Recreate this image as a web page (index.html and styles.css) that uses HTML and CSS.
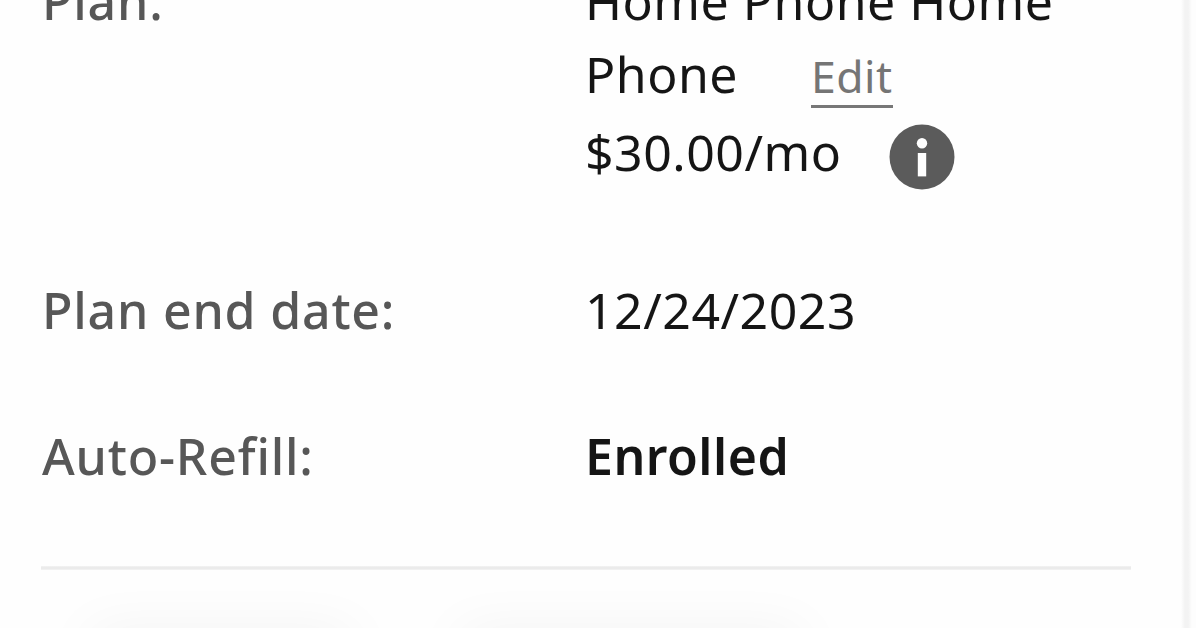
FILE: index.html
```html
<!DOCTYPE html>
<html lang="en">
<head>
  <meta charset="UTF-8" />
  <meta name="viewport" content="width=device-width, initial-scale=1.0"/>
  <title>Plan details</title>
  <link rel="stylesheet" href="styles.css">
</head>
<body>
  <main class="card">
    <div class="row plan">
      <div class="label">Plan:</div>
      <div class="value">
        <div class="first">Home Phone Home</div>
        <div class="line">Phone <a class="edit" href="#">Edit</a></div>
        <div class="line price">$30.00/mo
          <svg class="info" viewBox="0 0 66 66" aria-label="Info">
            <circle cx="33" cy="33" r="32.5" fill="#5b5b5b"/>
            <circle cx="33" cy="19.3" r="5.2" fill="#fff"/>
            <path d="M28.8 29h8.4v23.4h-8.4z" fill="#fff"/>
          </svg>
        </div>
      </div>
    </div>
    <div class="row date">
      <div class="label">Plan end date:</div>
      <div class="value">12/24/2023</div>
    </div>
    <div class="row refill">
      <div class="label">Auto-Refill:</div>
      <div class="value strong">Enrolled</div>
    </div>
    <hr class="divider">
    <div class="actions">
      <div class="shade"></div>
      <div class="shade wide"></div>
    </div>
  </main>
  <div class="edge"></div>
</body>
</html>
```

FILE: styles.css
```css
* {
  box-sizing: border-box;
}
body {
  margin: 0;
  height: 628px;
  display: flex;
  overflow: hidden;
  background: #fdfdfd;
  font-family: "Noto Sans", sans-serif;
  font-size: 50px;
  letter-spacing: 0.5px;
  color: #151515;
}
.card {
  width: 1181px;
  height: 628px;
  padding: 0 50px 0 41px;
  overflow: hidden;
  background: #fefefe;
}
.edge {
  width: 11px;
  background: linear-gradient(to right, #fefefe, #f3f3f3 35%, #f3f3f3 65%, #fdfdfd);
}
.row {
  display: grid;
  grid-template-columns: 544px 1fr;
  line-height: 78px;
  white-space: nowrap;
}
.plan {
  margin-top: -38px;
}
.first {
  height: 73px;
}
.label {
  padding-left: 1px;
  color: #575757;
  font-weight: 500;
  letter-spacing: 0.8px;
}
.line {
  display: flex;
  align-items: baseline;
  height: 78px;
}
.edit {
  margin-left: 73px;
  height: 61px;
  line-height: 58px;
  font-size: 44.5px;
  color: #757575;
  text-decoration: none;
  border-bottom: 3px solid #777;
}
.price {
  align-items: center;
}
.info {
  width: 66px;
  height: 66px;
  margin: 10px 0 0 47px;
}
.date {
  margin-top: 80px;
}
.refill {
  margin-top: 68px;
}
.strong {
  font-weight: 600;
}
.divider {
  margin: 71px 0 0;
  border: 0;
  height: 4px;
  background: linear-gradient(#f4f4f4, #ebebeb 35%, #ebebeb 65%, #f4f4f4);
}
.actions {
  display: flex;
  gap: 110px;
  padding: 69px 0 0 50px;
}
.shade {
  width: 260px;
  height: 20px;
  box-shadow: 0 0 56px #e6e6e6;
}
.wide {
  width: 340px;
}
```
